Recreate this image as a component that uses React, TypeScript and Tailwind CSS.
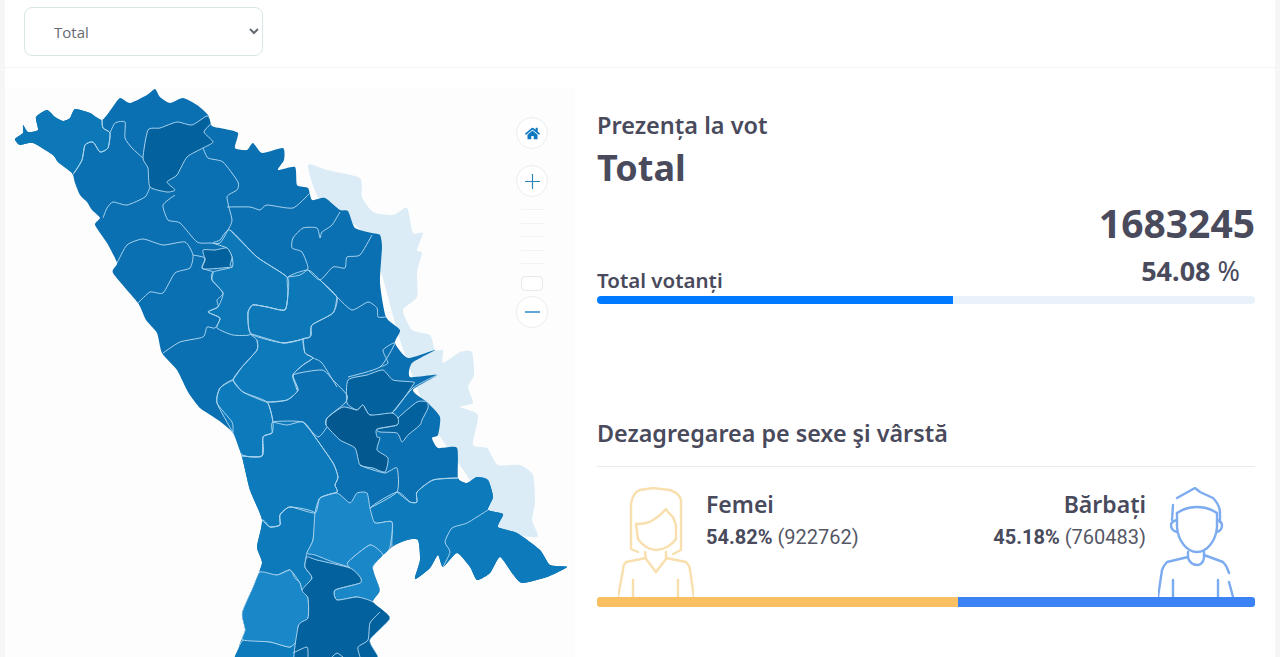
import React from 'react'
import { FaHome } from 'react-icons/fa'

type Pt = [number, number]

// catmull-rom through the traced points, so borders stay organic
const toPath = (pts: Pt[], closed = true) => {
  const n = pts.length
  const at = (i: number) => (closed ? pts[(i + n) % n] : pts[Math.max(0, Math.min(n - 1, i))])
  const k = 0.1
  let d = `M${pts[0][0]} ${pts[0][1]}`
  const last = closed ? n : n - 1
  for (let i = 0; i < last; i++) {
    const p0 = at(i - 1), p1 = at(i), p2 = at(i + 1), p3 = at(i + 2)
    const c1 = [p1[0] + (p2[0] - p0[0]) * k, p1[1] + (p2[1] - p0[1]) * k]
    const c2 = [p2[0] - (p3[0] - p1[0]) * k, p2[1] - (p3[1] - p1[1]) * k]
    d += `C${c1[0].toFixed(1)} ${c1[1].toFixed(1)} ${c2[0].toFixed(1)} ${c2[1].toFixed(1)} ${p2[0]} ${p2[1]}`
  }
  return closed ? d + 'Z' : d
}

const outline: Pt[] = [
  [15,139],[23,133],[23,125],[28,132],[38,130],[36,117],[47,110],[55,117],[63,121],[70,118],[75,109],[90,113],[102,120],
  [112,108],[120,98],[130,103],[147,95],[155,89],[160,97],[170,103],[183,98],[197,105],[208,115],[212,126],[225,129],[238,133],
  [235,148],[247,150],[253,143],[262,153],[283,148],[284,160],[278,170],[295,167],[297,185],[308,188],[312,200],[325,198],
  [340,210],[348,211],[355,228],[372,233],[380,235],[382,247],[380,283],[386,317],[400,330],[395,343],[408,358],[435,350],
  [412,363],[410,377],[437,375],[413,390],[428,403],[440,417],[438,435],[432,438],[438,448],[457,448],[458,478],[467,483],
  [477,477],[488,480],[493,497],[488,510],[503,514],[498,527],[517,533],[540,550],[550,565],[567,567],[547,577],[522,583],
  [512,573],[500,557],[490,573],[477,580],[470,567],[457,553],[443,567],[438,555],[430,568],[415,579],[420,560],[418,540],
  [407,540],[392,547],[373,567],[380,590],[373,602],[390,618],[370,640],[378,657],[378,672],[239,672],[239,647],[245,630],
  [242,613],[253,587],[262,563],[257,547],[262,520],[250,490],[242,457],[233,433],[218,420],[200,408],[188,392],[177,370],[162,353],
  [157,333],[146,320],[138,303],[113,273],[117,263],[107,243],[95,225],[100,218],[92,210],[87,202],[80,195],[75,183],[72,173],[58,162],
  [53,155],[33,143],[20,145],
]

const transnistria: Pt[] = [
  [308,165],[327,170],[360,178],[362,197],[373,212],[393,215],[407,208],[413,233],[423,233],[417,250],[422,253],[417,272],
  [417,297],[403,310],[412,330],[430,335],[435,350],[443,350],[443,363],[460,352],[472,352],[474,375],[468,387],[473,403],
  [460,407],[478,415],[473,445],[487,448],[498,465],[520,465],[533,475],[535,503],[532,520],[537,537],[500,530],[470,480],
  [430,420],[400,340],[370,240],[320,200],
]

const regions: { fill: string; pts: Pt[] }[] = [
  // north west
  { fill: '#0c78b8', pts: [[0,100],[102,100],[102,120],[103,128],[110,133],[108,148],[100,152],[93,142],[85,145],[82,160],[74,173],[60,185],[0,160]] },
  // centre
  { fill: '#0c78b8', pts: [[230,230],[257,257],[287,277],[288,293],[285,310],[267,307],[253,305],[248,313],[251,334],[233,335],[217,328],[220,318],[208,312],[218,307],[223,293],[212,280],[213,272],[232,267],[232,257],[227,248],[213,243],[220,240]] },
  { fill: '#0c78b8', pts: [[288,277],[308,270],[320,280],[337,297],[333,313],[312,325],[310,337],[280,343],[251,334],[248,313],[253,305],[267,307],[285,310],[288,293]] },
  { fill: '#0c7abb', pts: [[233,380],[243,392],[267,402],[273,422],[272,433],[263,437],[262,456],[242,455],[233,433],[217,403],[220,388]] },
  { fill: '#0c7abb', pts: [[251,334],[283,343],[300,340],[303,339],[305,353],[313,358],[303,365],[293,375],[298,390],[287,400],[267,402],[243,392],[233,380],[242,367],[257,350],[257,340]] },
  { fill: '#0c7abb', pts: [[273,422],[303,422],[315,437],[333,463],[338,477],[335,485],[337,492],[320,498],[315,513],[290,507],[280,515],[280,525],[270,527],[262,520],[230,480],[230,457],[262,456],[263,437],[272,433]] },
  { fill: '#0c7abb', pts: [[262,520],[270,527],[280,525],[280,515],[290,507],[315,513],[313,540],[307,553],[305,567],[312,578],[302,590],[300,583],[290,570],[277,575],[260,572],[240,560],[240,530]] },
  { fill: '#0c7abb', pts: [[370,508],[397,492],[410,502],[417,502],[417,492],[433,480],[458,478],[520,480],[600,560],[540,610],[400,610],[392,547],[392,522],[375,523]] },
  { fill: '#0c7abb', pts: [[243,640],[270,642],[290,647],[300,637],[300,680],[230,680]] },
  // lighter districts in the south
  { fill: '#1a87c9', pts: [[315,513],[320,498],[337,493],[350,503],[357,493],[367,493],[370,508],[375,523],[392,522],[390,547],[383,555],[370,545],[348,562],[350,567],[333,562],[315,555],[307,553],[313,540]] },
  { fill: '#1a87c9', pts: [[348,562],[370,545],[383,555],[373,567],[380,590],[373,602],[357,597],[337,600],[335,590],[360,583],[360,577],[350,568]] },
  { fill: '#1a87c9', pts: [[260,572],[277,575],[290,570],[295,578],[300,583],[302,590],[308,598],[308,618],[298,627],[300,637],[290,647],[270,642],[243,640],[245,630],[242,613],[253,587]] },
  // darker districts
  { fill: '#03619d', pts: [[143,158],[148,130],[160,128],[177,122],[192,125],[207,116],[211,123],[204,132],[213,142],[203,148],[187,157],[177,175],[167,182],[175,190],[167,192],[150,187],[148,168]] },
  { fill: '#03619d', pts: [[203,250],[215,250],[227,248],[232,257],[230,265],[232,267],[203,269],[205,260]] },
  { fill: '#03619d', pts: [[347,403],[348,380],[367,375],[383,370],[393,380],[413,382],[413,385],[392,413],[370,415],[363,405],[357,410]] },
  { fill: '#03619d', pts: [[398,418],[417,402],[427,402],[428,408],[422,420],[420,425],[408,435],[402,442],[397,433],[380,432],[377,429],[397,425]] },
  { fill: '#02588f', pts: [[343,407],[357,410],[363,405],[370,415],[392,413],[398,418],[397,425],[377,429],[377,437],[380,438],[377,450],[388,458],[385,472],[373,468],[360,465],[355,448],[340,440],[326,425],[328,417]] },
  { fill: '#03619d', pts: [[307,557],[317,560],[350,568],[360,577],[360,583],[335,590],[337,600],[357,597],[373,602],[390,618],[370,640],[378,657],[378,680],[297,680],[298,627],[308,618],[308,598],[302,590],[312,578],[305,567]] },
]

const borders: Pt[][] = [
  [[102,120],[103,128],[110,133],[108,148],[100,152],[93,142],[85,145],[82,160],[74,173]],
  [[110,133],[115,123],[125,122],[125,138],[132,148],[143,158]],
  [[150,187],[145,197],[127,205],[113,202],[107,208],[103,218]],
  [[203,148],[208,158],[223,162],[238,182],[237,190],[227,197],[232,220],[228,230],[220,243],[210,243],[197,242],[180,223],[168,220],[163,205],[175,195]],
  [[227,207],[250,207],[260,210],[267,205],[293,208],[310,193]],
  [[117,263],[127,245],[143,239],[163,245],[185,242],[193,255],[190,268],[175,273],[163,293],[150,292],[138,303]],
  [[193,255],[205,258],[202,268],[213,272],[212,280],[223,293],[217,300],[218,307],[208,312],[220,318],[215,328],[207,327],[203,337],[180,342],[163,353]],
  [[230,230],[257,257],[287,277],[288,293],[285,310],[267,307],[253,305],[248,313],[251,334],[283,343],[303,339]],
  [[257,340],[257,350],[242,367],[233,380]],
  [[340,212],[332,225],[322,232],[320,238],[317,228],[303,228],[293,238],[292,248],[302,252],[308,268],[300,275],[288,277]],
  [[372,235],[360,255],[347,257],[345,268],[333,267],[320,280],[308,270]],
  [[320,280],[337,297],[352,310],[368,302],[377,308],[378,317],[386,317]],
  [[337,297],[333,313],[312,325],[310,337],[303,339],[305,353],[313,358],[303,365],[293,375],[297,390]],
  [[313,358],[322,363],[337,387]],
  [[348,377],[380,367],[395,343],[383,350],[388,363],[380,367]],
  [[233,380],[220,388],[217,403],[232,422],[233,433]],
  [[233,380],[243,392],[267,402],[273,422],[272,433],[263,437],[262,456],[250,457],[242,455]],
  [[267,402],[287,400],[298,390],[293,375],[322,370],[333,380],[347,395],[345,403],[327,418],[326,425]],
  [[273,422],[287,425],[303,422],[315,437],[333,463],[338,477],[335,485],[337,492],[320,498],[315,513],[290,507],[280,515],[280,525],[270,527],[262,520]],
  [[303,422],[318,437],[327,427]],
  [[360,465],[367,468],[385,473],[397,468],[397,492],[370,508]],
  [[397,492],[410,502],[417,502],[417,492],[433,480],[458,478]],
  [[488,510],[467,523],[452,528],[445,542],[450,552],[443,567]],
  [[392,413],[413,388],[437,375]],
  [[380,612],[370,623],[368,640],[358,647],[360,657]],
  [[293,653],[307,647],[308,657]],
  [[332,657],[337,653],[343,657]],
]

const MoldovaMap = () => (
  <svg viewBox="5 87 570 570" className="block w-[570px] h-[570px]">
    <defs>
      <clipPath id="country">
        <path d={toPath(outline)} />
      </clipPath>
    </defs>
    <path d={toPath(transnistria)} fill="#dbecf7" />
    <path d={toPath(outline)} fill="#0a70b2" />
    <g clipPath="url(#country)">
      {regions.map((r, i) => (
        <path key={i} d={toPath(r.pts)} fill={r.fill} stroke="#a9d3ee" strokeWidth="1" />
      ))}
      {borders.map((b, i) => (
        <path key={i} d={toPath(b, false)} fill="none" stroke="#a9d3ee" strokeWidth="1" />
      ))}
    </g>
  </svg>
)

const FemaleIcon = () => (
  <svg viewBox="0 0 76 110" className="block w-[76px] h-[110px]" fill="none" stroke="#f9dfae" strokeWidth="2.4" strokeLinecap="round" strokeLinejoin="round">
    <path d="M20 65L13 62V17C14 9 18 4 22 3L35 1L52 3C58 5 62 9 63 13V63L55 67" />
    <path d="M18 37C26 37 31 36 35 33C40 30 44 27 48 22C50 26 53 28 55 30L58 38" />
    <path d="M18 37L20 52C24 58 31 63 38 63C46 63 54 58 58 52V38" />
    <path d="M27 65L28 72L38 85L48 72V65" />
    <path d="M28 71L8 75C6 77 5 80 5 83L0 110" />
    <path d="M48 71L68 75C70 77 72 80 72 83L76 110" />
    <path d="M15 93V110M60 93V110" />
  </svg>
)

const MaleIcon = () => (
  <svg viewBox="0 0 76 110" className="block w-[76px] h-[110px]" fill="none" stroke="#7dabf0" strokeWidth="2.4" strokeLinecap="round" strokeLinejoin="round">
    <path d="M19 11L37 1L42 5L55 11C60 16 62 20 62 26V35" />
    <path d="M15 18L14 33" />
    <path d="M19 26C25 22 32 20 39 20C46 20 53 22 59 26" />
    <path d="M19 26V40C20 54 29 65 39 65C49 65 58 54 59 40V26" />
    <path d="M19 33C15 34 13 36 13 38C13 41 15 44 19 45" />
    <path d="M59 33C62 34 64 36 64 38C64 41 62 44 59 45" />
    <path d="M30 65V71C32 76 35 78 39 78C42 78 45 76 46 71V65" />
    <path d="M30 70L9 75C7 77 5 80 4 83L0 110" />
    <path d="M46 68L65 75C68 78 70 82 71 86M71 95L75 110" />
    <path d="M15 93V110M60 93V110" />
  </svg>
)

const ZoomButton = ({ children }: { children: React.ReactNode }) => (
  <div className="flex h-8 w-8 items-center justify-center rounded-full border border-[#e9eeee] bg-white">
    {children}
  </div>
)

const headingFont = "font-['Noto_Sans',sans-serif] text-[#494a5c]"

export default function App() {
  return (
    <div className="h-[657px] w-[1280px] overflow-hidden bg-[#f6f6f6] px-[5px] font-['Roboto',sans-serif]">
      <div className="h-full bg-white">
        {/* Filter bar */}
        <div className="flex h-[68px] items-start border-b border-[#f2f3f3] pl-[19px] pt-[7px]">
          <select className="h-[49px] w-[239px] rounded-lg border border-[#d8e6e6] bg-white pl-[25px] pt-px font-['Open_Sans',sans-serif] text-[15px] text-[#666b73]">
            <option>Total</option>
          </select>
        </div>

        <div className="mt-[19px] flex">
          {/* Map */}
          <div className="relative h-[570px] w-[570px] shrink-0 bg-[#fdfdfd]">
            <MoldovaMap />
            <div className="absolute left-[511px] top-[30px] flex w-8 flex-col items-center">
              <ZoomButton>
                <FaHome className="text-[15px] text-[#0a78c2]" />
              </ZoomButton>
              <div className="mt-[16px]">
                <ZoomButton>
                  <svg width="17" height="17" viewBox="0 0 17 17" stroke="#2a87b8" strokeWidth="1.2">
                    <path d="M1 8.5H16M8.5 1V16" />
                  </svg>
                </ZoomButton>
              </div>
              <div className="mt-[12px] flex w-[23px] flex-col gap-[12.5px]">
                <div className="h-px bg-[#f1f3f4]" />
                <div className="h-px bg-[#f1f3f4]" />
                <div className="h-px bg-[#f1f3f4]" />
                <div className="h-px bg-[#f1f3f4]" />
                <div className="h-px bg-[#f1f3f4]" />
              </div>
              <div className="mt-[12px] h-[15px] w-[22px] rounded-sm border border-[#e6e9ea] bg-white" />
              <div className="mt-[5px]">
                <ZoomButton>
                  <div className="h-[1.5px] w-[15px] bg-[#5fa8d3]" />
                </ZoomButton>
              </div>
            </div>
          </div>

          {/* Turnout */}
          <div className="ml-[22px] w-[658px]">
            <h3 className={`${headingFont} mt-[22px] text-[23.5px] font-semibold leading-[32px]`}>Prezența la vot</h3>
            <h2 className={`${headingFont} mt-[3px] text-[36px] font-bold leading-[48px]`}>Total</h2>
            <div className={`${headingFont} mt-[9px] text-right text-[39px] font-bold leading-[44px]`}>1683245</div>
            <div className="flex h-[48px] items-end justify-between">
              <span className={`${headingFont} text-[20.5px] font-semibold leading-[26px]`}>Total votanți</span>
              <span className={`${headingFont} mr-[15px] mt-[9px] self-start text-[27px] leading-[34px]`}>
                <b className="font-bold">54.08</b> %
              </span>
            </div>
            <div className="mt-[3px] h-2 overflow-hidden rounded-full bg-[#e9f2fb]">
              <div className="h-full bg-[#007bff]" style={{ width: '54.08%' }} />
            </div>

            {/* Sex and age */}
            <h3 className={`${headingFont} mt-[113px] text-[23.3px] font-semibold leading-[32px]`}>Dezagregarea pe sexe şi vârstă</h3>
            <div className="mt-[17px] border-t border-[#e8ebed]">
              <div className="flex items-end justify-between pt-[20px]">
                <div className="flex items-start">
                  <div className="ml-[21px]"><FemaleIcon /></div>
                  <div className="ml-[12px]">
                    <div className={`${headingFont} text-[23px] font-semibold leading-[34px]`}>Femei</div>
                    <div className="mt-[2px] text-[20px] leading-[28px] text-[#555766]">
                      <b className="font-bold text-[#494a5c]">54.82%</b> (922762)
                    </div>
                  </div>
                </div>
                <div className="flex items-start">
                  <div className="mr-[12px] text-right">
                    <div className={`${headingFont} text-[23px] font-semibold leading-[34px]`}>Bărbați</div>
                    <div className="mt-[2px] text-[20px] leading-[28px] text-[#555766]">
                      <b className="font-bold text-[#494a5c]">45.18%</b> (760483)
                    </div>
                  </div>
                  <div className="mr-[21px]"><MaleIcon /></div>
                </div>
              </div>
              <div className="flex h-[10px] overflow-hidden rounded-[3px]">
                <div className="h-full bg-[#f8c063]" style={{ width: '54.82%' }} />
                <div className="h-full flex-1 bg-[#3b82f6]" />
              </div>
            </div>
          </div>
        </div>
      </div>
    </div>
  )
}
